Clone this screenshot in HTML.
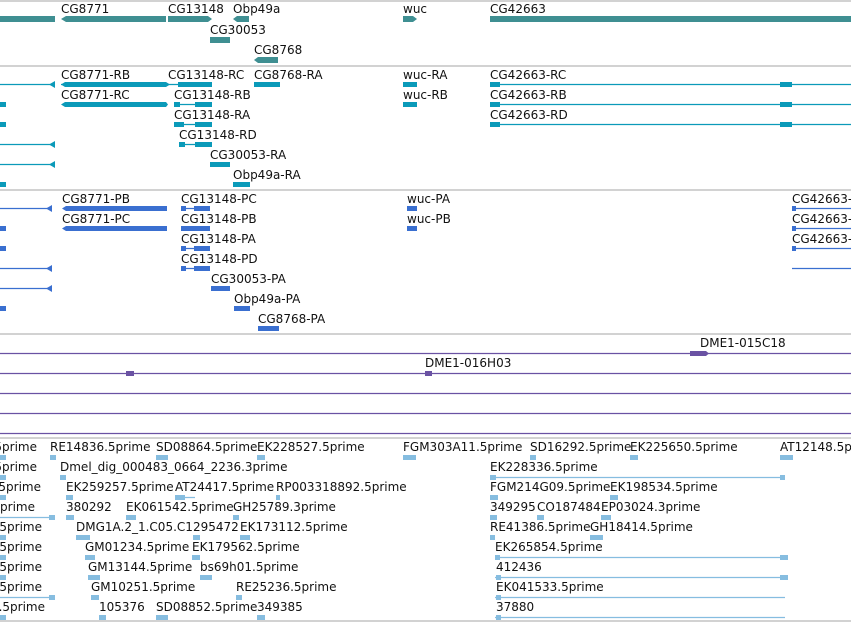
<!DOCTYPE html>
<html><head><meta charset="utf-8"><style>
html,body{margin:0;padding:0;background:#fff;width:851px;height:622px;overflow:hidden}
svg{display:block}
text{font-family:"DejaVu Sans","Liberation Sans",sans-serif;font-size:12px;fill:#111}
</style></head><body>
<svg width="851" height="622" viewBox="0 0 851 622">
<!-- separators -->
<g stroke="#c4c4c4" stroke-width="1.5">
<line x1="0" y1="1" x2="851" y2="1"/><line x1="0" y1="66" x2="851" y2="66"/>
<line x1="0" y1="190" x2="851" y2="190"/><line x1="0" y1="334" x2="851" y2="334"/>
<line x1="0" y1="438" x2="851" y2="438"/><line x1="0" y1="621" x2="851" y2="621"/>
</g>
<!-- gene track -->
<g fill="#3f8f92">
<rect x="0" y="16" width="55" height="6"/>
<polygon points="61,19 66,16 166,16 166,22 66,22"/>
<rect x="168" y="16" width="40" height="6"/><polygon points="208,16 212,19 208,22"/>
<polygon points="233,19 237,16 249,16 249,22 237,22"/>
<polygon points="403,16 413,16 417,19 413,22 403,22"/>
<rect x="490" y="16" width="361" height="6"/>
<rect x="210" y="37" width="20" height="6"/>
<polygon points="254,60 258,57 278,57 278,63 258,63"/>
</g>
<text x="61" y="13">CG8771</text><text x="168" y="13">CG13148</text><text x="233" y="13">Obp49a</text>
<text x="403" y="13">wuc</text><text x="490" y="13">CG42663</text>
<text x="210" y="34">CG30053</text><text x="254" y="54">CG8768</text>
<!-- transcripts -->
<g stroke="#0b9ab9" stroke-width="1.2">
<line x1="0" y1="84.5" x2="55" y2="84.5"/><line x1="0" y1="144.5" x2="55" y2="144.5"/><line x1="0" y1="164.5" x2="55" y2="164.5"/>
<line x1="490" y1="84.5" x2="851" y2="84.5"/><line x1="490" y1="104.5" x2="851" y2="104.5"/><line x1="490" y1="124.5" x2="851" y2="124.5"/>
<line x1="174" y1="104.5" x2="212" y2="104.5"/><line x1="174" y1="124.5" x2="212" y2="124.5"/><line x1="179" y1="144.5" x2="212" y2="144.5"/>
<line x1="61" y1="84.5" x2="212" y2="84.5"/>
</g>
<g fill="#0b9ab9">
<polygon points="49,84.5 55,81 55,88"/><polygon points="49,144.5 55,141 55,148"/><polygon points="49,164.5 55,161 55,168"/>
<rect x="0" y="102" width="6" height="5"/><rect x="0" y="122" width="6" height="5"/><rect x="0" y="182" width="6" height="5"/>
<polygon points="61,84.5 65,82 166,82 170,84.5 166,87 65,87"/>
<polygon points="61,104.5 65,102 166,102 168,104.5 166,107 65,107"/>
<rect x="178" y="82" width="34" height="5"/><rect x="195" y="102" width="17" height="5"/><rect x="174" y="102" width="6" height="5"/>
<rect x="174" y="122" width="10" height="5"/><rect x="195" y="122" width="17" height="5"/>
<rect x="179" y="142" width="6" height="5"/><rect x="195" y="142" width="17" height="5"/>
<rect x="210" y="162" width="20" height="5"/><rect x="233" y="182" width="17" height="5"/>
<rect x="254" y="82" width="26" height="5"/>
<rect x="403" y="82" width="14" height="5"/><rect x="403" y="102" width="14" height="5"/>
<rect x="490" y="82" width="10" height="5"/><rect x="490" y="102" width="10" height="5"/><rect x="490" y="122" width="10" height="5"/>
<rect x="780" y="82" width="12" height="5"/><rect x="780" y="102" width="12" height="5"/><rect x="780" y="122" width="12" height="5"/>
</g>
<text x="61" y="79">CG8771-RB</text><text x="168" y="79">CG13148-RC</text><text x="254" y="79">CG8768-RA</text><text x="403" y="79">wuc-RA</text><text x="490" y="79">CG42663-RC</text>
<text x="61" y="99">CG8771-RC</text><text x="174" y="99">CG13148-RB</text><text x="403" y="99">wuc-RB</text><text x="490" y="99">CG42663-RB</text>
<text x="174" y="119">CG13148-RA</text><text x="490" y="119">CG42663-RD</text>
<text x="179" y="139">CG13148-RD</text><text x="210" y="159">CG30053-RA</text><text x="233" y="179">Obp49a-RA</text>
<!-- proteins -->
<g stroke="#3a6fd0" stroke-width="1.2">
<line x1="0" y1="208.5" x2="52" y2="208.5"/><line x1="0" y1="268.5" x2="52" y2="268.5"/><line x1="0" y1="288.5" x2="52" y2="288.5"/>
<line x1="792" y1="228.5" x2="851" y2="228.5"/><line x1="792" y1="248.5" x2="851" y2="248.5"/><line x1="792" y1="268.5" x2="851" y2="268.5"/>
<line x1="181" y1="208.5" x2="210" y2="208.5"/><line x1="181" y1="228.5" x2="210" y2="228.5"/><line x1="181" y1="248.5" x2="210" y2="248.5"/><line x1="181" y1="268.5" x2="210" y2="268.5"/>
</g>
<g fill="#3a6fd0">
<polygon points="46,208.5 52,205 52,212"/><polygon points="46,268.5 52,265 52,272"/><polygon points="46,288.5 52,285 52,292"/>
<rect x="0" y="226" width="6" height="5"/><rect x="0" y="246" width="6" height="5"/><rect x="0" y="306" width="6" height="5"/>
<polygon points="62,208.5 66,206 167,206 167,211 66,211"/><polygon points="62,228.5 66,226 167,226 167,231 66,231"/>
<rect x="181" y="206" width="5" height="5"/><rect x="194" y="206" width="16" height="5"/>
<rect x="181" y="226" width="29" height="5"/><rect x="181" y="246" width="5" height="5"/><rect x="194" y="246" width="16" height="5"/>
<rect x="181" y="266" width="5" height="5"/><rect x="194" y="266" width="16" height="5"/>
<rect x="211" y="286" width="19" height="5"/><rect x="234" y="306" width="16" height="5"/><rect x="258" y="326" width="21" height="5"/>
<rect x="407" y="206" width="10" height="5"/><rect x="407" y="226" width="10" height="5"/>
<rect x="792" y="206" width="4" height="5"/><rect x="792" y="226" width="4" height="5"/><rect x="792" y="246" width="4" height="5"/>
</g>
<line x1="792" y1="208.5" x2="851" y2="208.5" stroke="#3a6fd0" stroke-width="1.2"/>
<text x="62" y="203">CG8771-PB</text><text x="181" y="203">CG13148-PC</text><text x="407" y="203">wuc-PA</text><text x="792" y="203">CG42663-PC</text>
<text x="62" y="223">CG8771-PC</text><text x="181" y="223">CG13148-PB</text><text x="407" y="223">wuc-PB</text><text x="792" y="223">CG42663-PB</text>
<text x="181" y="243">CG13148-PA</text><text x="792" y="243">CG42663-PD</text>
<text x="181" y="263">CG13148-PD</text><text x="211" y="283">CG30053-PA</text><text x="234" y="303">Obp49a-PA</text><text x="258" y="323">CG8768-PA</text>
<!-- DME -->
<g stroke="#6a52a3" stroke-width="1.2">
<line x1="0" y1="353.5" x2="851" y2="353.5"/><line x1="0" y1="373.5" x2="851" y2="373.5"/>
<line x1="0" y1="393.5" x2="851" y2="393.5"/><line x1="0" y1="413.5" x2="851" y2="413.5"/><line x1="0" y1="433.5" x2="851" y2="433.5"/>
</g>
<g fill="#6a52a3">
<rect x="690" y="351" width="16" height="5"/><polygon points="706,351 709,353.5 706,356"/>
<rect x="126" y="371" width="8" height="5"/><rect x="425" y="371" width="7" height="5"/>
</g>
<text x="700" y="347">DME1-015C18</text><text x="425" y="367">DME1-016H03</text>
<!-- EST -->
<g stroke="#86bde0" stroke-width="1.2">
<line x1="490" y1="477.5" x2="785" y2="477.5"/><line x1="0" y1="517.5" x2="55" y2="517.5"/><line x1="0" y1="597.5" x2="55" y2="597.5"/>
<line x1="495" y1="557.5" x2="785" y2="557.5"/><line x1="495" y1="577.5" x2="785" y2="577.5"/><line x1="495" y1="597.5" x2="785" y2="597.5"/><line x1="495" y1="617.5" x2="785" y2="617.5"/>
<line x1="175" y1="497.5" x2="195" y2="497.5"/>
</g>
<g fill="#86bde0">
<rect x="0" y="455" width="6" height="5"/><rect x="0" y="475" width="6" height="5"/><rect x="0" y="495" width="6" height="5"/><rect x="0" y="535" width="6" height="5"/><rect x="0" y="555" width="6" height="5"/><rect x="0" y="575" width="6" height="5"/><rect x="0" y="615" width="6" height="5"/>
<rect x="49" y="515" width="6" height="5"/><rect x="49" y="595" width="6" height="5"/>
<rect x="50" y="455" width="6" height="5"/><rect x="156" y="455" width="12" height="5"/><rect x="257" y="455" width="8" height="5"/><rect x="403" y="455" width="13" height="5"/><rect x="530" y="455" width="6" height="5"/><rect x="630" y="455" width="8" height="5"/><rect x="780" y="455" width="13" height="5"/>
<rect x="60" y="475" width="6" height="5"/><rect x="490" y="475" width="6" height="5"/><rect x="780" y="475" width="5" height="5"/>
<rect x="66" y="495" width="7" height="5"/><rect x="175" y="495" width="10" height="5"/><rect x="276" y="495" width="4" height="5"/><rect x="490" y="495" width="8" height="5"/><rect x="610" y="495" width="8" height="5"/>
<rect x="66" y="515" width="8" height="5"/><rect x="126" y="515" width="10" height="5"/><rect x="233" y="515" width="6" height="5"/><rect x="490" y="515" width="7" height="5"/><rect x="537" y="515" width="7" height="5"/><rect x="601" y="515" width="10" height="5"/>
<rect x="76" y="535" width="14" height="5"/><rect x="193" y="535" width="7" height="5"/><rect x="240" y="535" width="10" height="5"/><rect x="490" y="535" width="5" height="5"/><rect x="590" y="535" width="13" height="5"/>
<rect x="85" y="555" width="10" height="5"/><rect x="192" y="555" width="8" height="5"/><rect x="495" y="555" width="5" height="5"/><rect x="780" y="555" width="8" height="5"/>
<rect x="88" y="575" width="12" height="5"/><rect x="200" y="575" width="12" height="5"/><rect x="496" y="575" width="5" height="5"/><rect x="780" y="575" width="8" height="5"/>
<rect x="91" y="595" width="8" height="5"/><rect x="236" y="595" width="6" height="5"/><rect x="496" y="595" width="5" height="5"/>
<rect x="99" y="615" width="7" height="5"/><rect x="156" y="615" width="12" height="5"/><rect x="257" y="615" width="8" height="5"/><rect x="496" y="615" width="5" height="5"/>
</g>
<g>
<text x="37" y="451" text-anchor="end">5prime</text><text x="50" y="451">RE14836.5prime</text><text x="156" y="451">SD08864.5prime</text><text x="257" y="451">EK228527.5prime</text><text x="403" y="451">FGM303A11.5prime</text><text x="530" y="451">SD16292.5prime</text><text x="630" y="451">EK225650.5prime</text><text x="780" y="451">AT12148.5prime</text>
<text x="37" y="471" text-anchor="end">5prime</text><text x="60" y="471">Dmel_dig_000483_0664_2236.3prime</text><text x="490" y="471">EK228336.5prime</text>
<text x="41" y="491" text-anchor="end">5prime</text><text x="66" y="491">EK259257.5prime</text><text x="175" y="491">AT24417.5prime</text><text x="276" y="491">RP003318892.5prime</text><text x="490" y="491">FGM214G09.5prime</text><text x="610" y="491">EK198534.5prime</text>
<text x="35" y="511" text-anchor="end">prime</text><text x="66" y="511">380292</text><text x="126" y="511">EK061542.5prime</text><text x="233" y="511">GH25789.3prime</text><text x="490" y="511">349295</text><text x="537" y="511">CO187484</text><text x="601" y="511">EP03024.3prime</text>
<text x="42" y="531" text-anchor="end">5prime</text><text x="76" y="531">DMG1A.2_1.C05.C1</text><text x="193" y="531">295472</text><text x="240" y="531">EK173112.5prime</text><text x="490" y="531">RE41386.5prime</text><text x="590" y="531">GH18414.5prime</text>
<text x="42" y="551" text-anchor="end">5prime</text><text x="85" y="551">GM01234.5prime</text><text x="192" y="551">EK179562.5prime</text><text x="495" y="551">EK265854.5prime</text>
<text x="42" y="571" text-anchor="end">5prime</text><text x="88" y="571">GM13144.5prime</text><text x="200" y="571">bs69h01.5prime</text><text x="496" y="571">412436</text>
<text x="42" y="591" text-anchor="end">5prime</text><text x="91" y="591">GM10251.5prime</text><text x="236" y="591">RE25236.5prime</text><text x="496" y="591">EK041533.5prime</text>
<text x="45" y="611" text-anchor="end">.5prime</text><text x="99" y="611">105376</text><text x="156" y="611">SD08852.5prime</text><text x="257" y="611">349385</text><text x="496" y="611">37880</text>
</g>
</svg>
</body></html>
